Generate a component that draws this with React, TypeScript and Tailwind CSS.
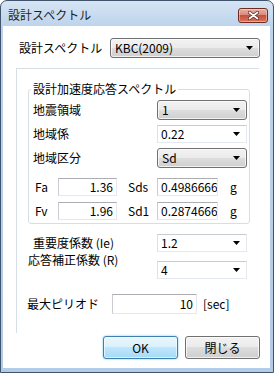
import React from 'react';

function Arrow() {
  return (
    <svg width="7" height="4" viewBox="0 0 7 4" className="shrink-0">
      <path d="M0 0h7L3.5 4z" fill="#000" />
    </svg>
  );
}

// Vista style drop-down list (button look)
function DropList({ value, className }: { value: string; className: string }) {
  return (
    <div
      className={`flex items-center justify-between rounded-[3px] border border-[#707070] bg-[linear-gradient(#f2f2f2,#ebebeb_50%,#dddddd_50%,#cfcfcf)] pl-[4px] pr-[6px] shadow-[inset_0_0_0_1px_rgba(255,255,255,0.7)] ${className}`}
    >
      <span className="leading-[14px]">{value}</span>
      <Arrow />
    </div>
  );
}

// Flat combo box (white field)
function FlatCombo({ value }: { value: string }) {
  return (
    <div className="flex h-[18px] w-[90px] items-center justify-between border border-[#e3e9ef] border-t-[#c7ccd3] border-l-[#dde1e6] bg-white pl-[3px] pr-[6px]">
      <span className="leading-[14px]">{value}</span>
      <Arrow />
    </div>
  );
}

function TextField({ value, className, right }: { value: string; className: string; right?: boolean }) {
  return (
    <div
      className={`flex items-center overflow-hidden whitespace-nowrap border border-[#e3e9ef] border-t-[#abadb3] border-l-[#c9ccd2] bg-white px-[3px] ${right ? 'justify-end' : 'justify-start'} ${className}`}
    >
      <span className="leading-[14px]">{value}</span>
    </div>
  );
}

export default function App() {
  return (
    <div className="h-[373px] w-[274px] font-['Noto_Sans_CJK_JP',sans-serif] text-[12px] text-black">
      <div className="flex h-full flex-col overflow-hidden rounded-t-[7px] border border-[#40546b] bg-[linear-gradient(#d6e5f5,#bcd3eb_26px,#b2cbe6)]">
        {/* title bar */}
        <div className="flex h-[25px] shrink-0 items-center justify-between pl-[7px] pr-[5px] pt-[3px]">
          <span className="leading-[16px] text-[#1e1e1e]">設計スペクトル</span>
          <div className="flex h-[15px] w-[30px] items-center justify-center rounded-[3px] border border-[#6e2b22] bg-[linear-gradient(#eab1a5,#d88573_50%,#c5523b_50%,#d7745c)] shadow-[inset_0_0_0_1px_rgba(255,220,210,0.5)]">
            <svg width="11" height="9" viewBox="0 0 11 9">
              <path d="M1.5 1.5l8 6M9.5 1.5l-8 6" stroke="#5a1d15" strokeWidth="3.2" strokeLinecap="round" />
              <path d="M1.5 1.5l8 6M9.5 1.5l-8 6" stroke="#fff" strokeWidth="1.8" strokeLinecap="round" />
            </svg>
          </div>
        </div>

        {/* client area */}
        <div className="ml-[2px] mr-[3px] flex h-[342px] shrink-0 flex-col bg-white">
          <div className="mt-[12px] flex h-[20px] items-center">
            <span className="w-[107px] pl-[16px] leading-[16px]">設計スペクトル</span>
            <DropList value="KBC(2009)" className="h-[20px] w-[150px]" />
          </div>

          <div className="ml-[13px] mt-[10px] flex h-[265px] w-[243px] flex-col border-l border-t border-[#d5dfe5]">
            <fieldset className="ml-[11px] mt-[12px] w-[222px] rounded-[3px] border border-[#d5dfe5] px-[2px] pb-[3px]">
              <legend className="px-[2px] leading-[16px]">設計加速度応答スペクトル</legend>
              <div className="mt-[3px] flex flex-col gap-[4px]">
                <div className="flex h-[20px] items-center">
                  <span className="w-[126px] pl-[2px] leading-[16px]">地震領域</span>
                  <DropList value="1" className="h-[20px] w-[90px]" />
                </div>
                <div className="flex h-[20px] items-center">
                  <span className="w-[126px] pl-[2px] leading-[16px]">地域係</span>
                  <FlatCombo value="0.22" />
                </div>
                <div className="flex h-[20px] items-center">
                  <span className="w-[126px] pl-[2px] leading-[16px]">地域区分</span>
                  <DropList value="Sd" className="h-[20px] w-[90px]" />
                </div>
              </div>
              <div className="mt-[10px] flex flex-col gap-[6px]">
                <div className="flex h-[18px] items-center">
                  <span className="w-[27px] pl-[4px] leading-[16px]">Fa</span>
                  <TextField value="1.36" right className="h-[18px] w-[59px]" />
                  <span className="ml-[11px] w-[29px] leading-[16px]">Sds</span>
                  <TextField value="0.49866666" className="h-[18px] w-[61px]" />
                  <span className="ml-[12px] leading-[16px]">g</span>
                </div>
                <div className="flex h-[18px] items-center">
                  <span className="w-[27px] pl-[4px] leading-[16px]">Fv</span>
                  <TextField value="1.96" right className="h-[18px] w-[59px]" />
                  <span className="ml-[11px] w-[29px] leading-[16px]">Sd1</span>
                  <TextField value="0.28746666" className="h-[18px] w-[61px]" />
                  <span className="ml-[12px] leading-[16px]">g</span>
                </div>
              </div>
            </fieldset>

            <div className="mt-[10px] flex h-[18px] items-center">
              <span className="w-[140px] pl-[16px] leading-[16px]">重要度係数 (Ie)</span>
              <FlatCombo value="1.2" />
            </div>
            <div className="flex items-start">
              <span className="w-[140px] pl-[11px] leading-[16px]">応答補正係数 (R)</span>
              <div className="mt-[9px]">
                <FlatCombo value="4" />
              </div>
            </div>
            <div className="mt-[15px] flex h-[20px] items-center">
              <span className="w-[95px] pl-[10px] leading-[16px]">最大ピリオド</span>
              <TextField value="10" right className="h-[20px] w-[85px]" />
              <span className="ml-[6px] leading-[16px]">[sec]</span>
            </div>
          </div>

          <div className="mt-[3px] flex gap-[7px] pl-[100px]">
            <button className="flex h-[23px] w-[75px] items-center justify-center rounded-[3px] border border-[#3c7fb1] bg-[linear-gradient(#eaf6fd,#d9f0fc_50%,#bee6fd_50%,#a7d9f5)] shadow-[inset_0_0_0_1px_rgba(255,255,255,0.6),0_0_2px_#48c0f0]">
              <span className="leading-[14px]">OK</span>
            </button>
            <button className="flex h-[23px] w-[75px] items-center justify-center rounded-[3px] border border-[#707070] bg-[linear-gradient(#f2f2f2,#ebebeb_50%,#dddddd_50%,#cfcfcf)] shadow-[inset_0_0_0_1px_rgba(255,255,255,0.7)]">
              <span className="leading-[14px]">閉じる</span>
            </button>
          </div>
        </div>
      </div>
    </div>
  );
}
